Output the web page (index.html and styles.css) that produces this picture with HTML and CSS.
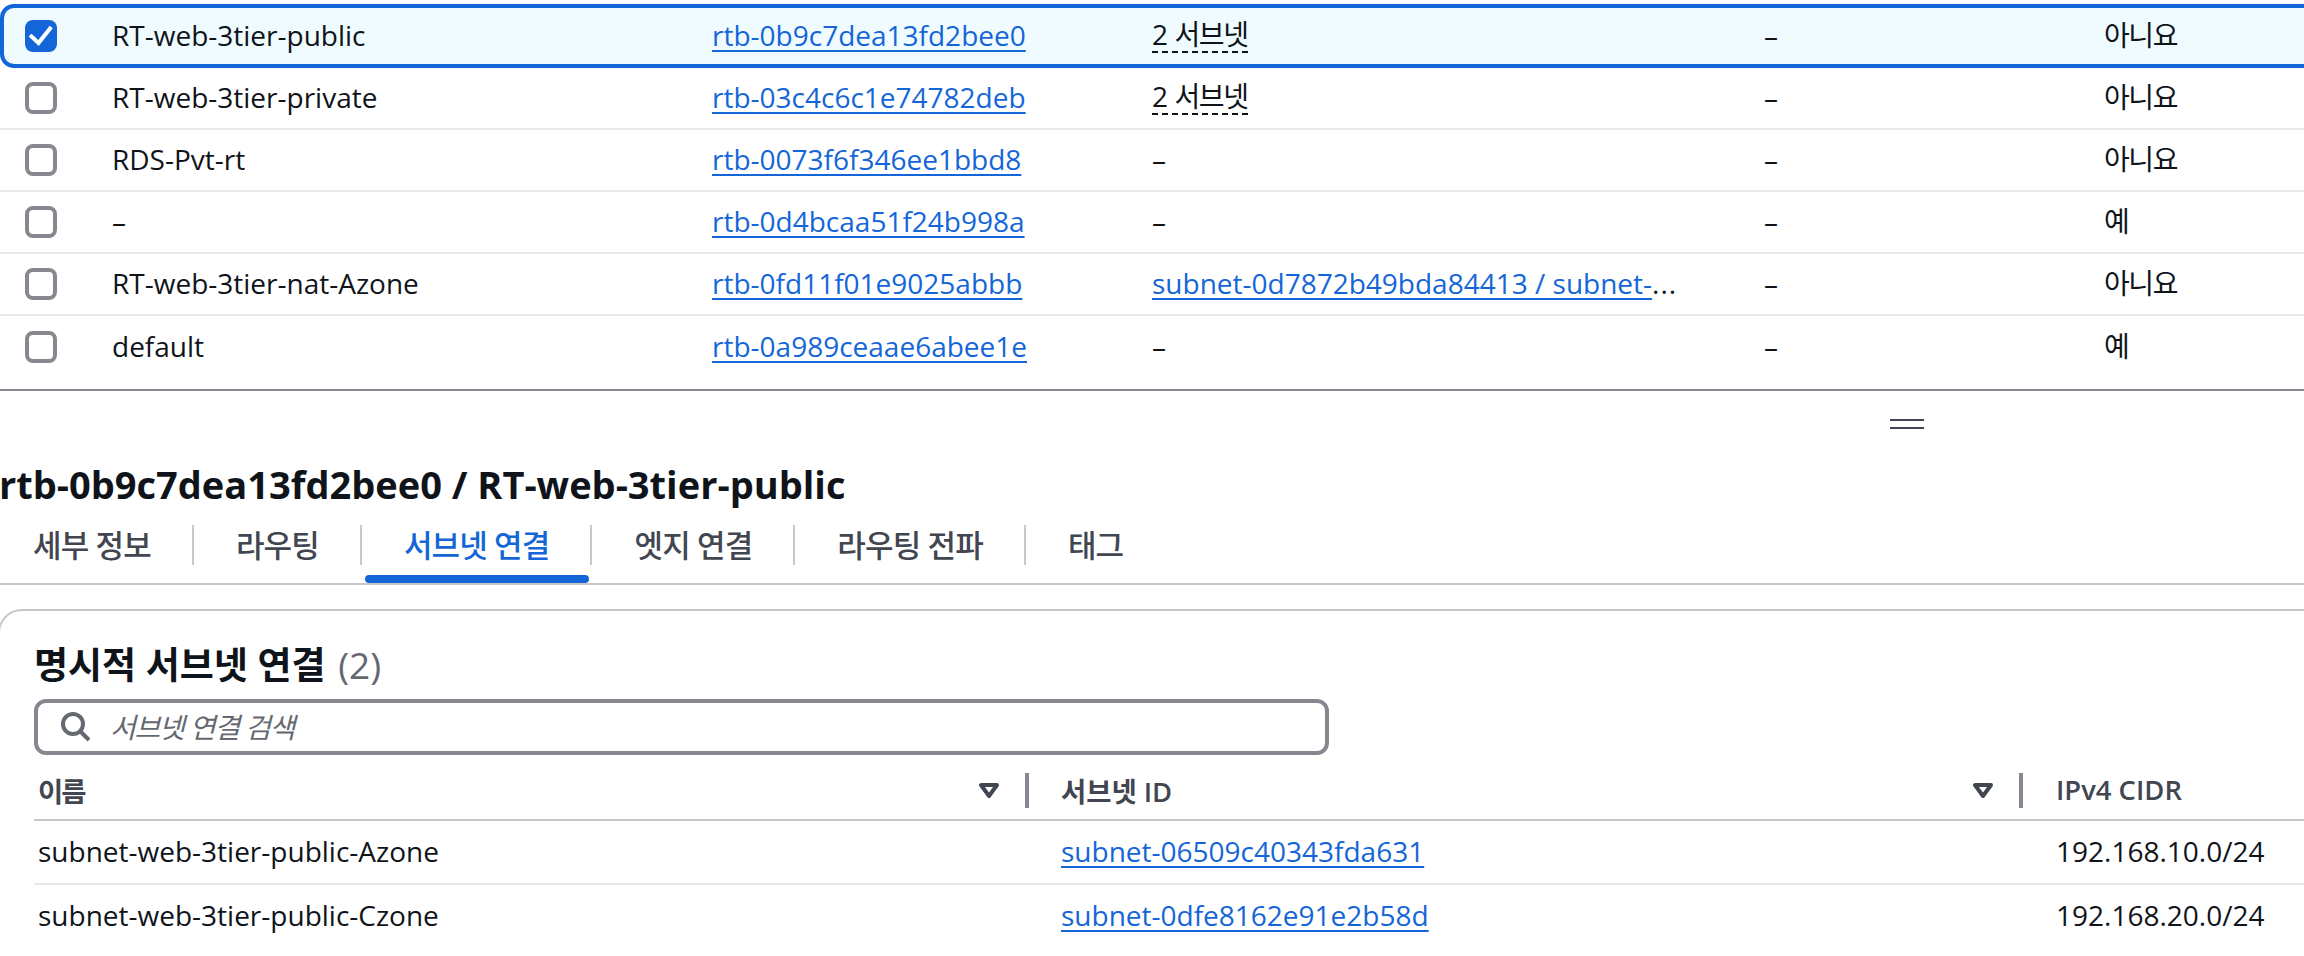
FILE: index.html
```html
<!DOCTYPE html>
<html lang="ko">
<head>
<meta charset="utf-8">
<title>라우팅 테이블</title>
<link rel="stylesheet" href="styles.css">
</head>
<body>
<div class="page">
  <section class="rt-table">
    <div class="rt-row selected">
      <span class="box checked"><svg viewBox="0 0 32 32" width="32" height="32"><path d="M6.5 16.5 13.5 23 25 8.5" class="tick"/></svg></span>
      <span class="cell">RT-web-3tier-public</span>
      <span class="cell"><a class="link">rtb-0b9c7dea13fd2bee0</a></span>
      <span class="cell"><span class="dashed ko">2 서브넷</span></span>
      <span class="cell">–</span>
      <span class="cell ko">아니요</span>
    </div>
    <div class="rt-row">
      <span class="box"></span>
      <span class="cell">RT-web-3tier-private</span>
      <span class="cell"><a class="link">rtb-03c4c6c1e74782deb</a></span>
      <span class="cell"><span class="dashed ko">2 서브넷</span></span>
      <span class="cell">–</span>
      <span class="cell ko">아니요</span>
    </div>
    <div class="rt-row">
      <span class="box"></span>
      <span class="cell">RDS-Pvt-rt</span>
      <span class="cell"><a class="link">rtb-0073f6f346ee1bbd8</a></span>
      <span class="cell">–</span>
      <span class="cell">–</span>
      <span class="cell ko">아니요</span>
    </div>
    <div class="rt-row">
      <span class="box"></span>
      <span class="cell">–</span>
      <span class="cell"><a class="link">rtb-0d4bcaa51f24b998a</a></span>
      <span class="cell">–</span>
      <span class="cell">–</span>
      <span class="cell ko">예</span>
    </div>
    <div class="rt-row">
      <span class="box"></span>
      <span class="cell">RT-web-3tier-nat-Azone</span>
      <span class="cell"><a class="link">rtb-0fd11f01e9025abbb</a></span>
      <span class="cell"><a class="link">subnet-0d7872b49bda84413 / subnet-</a><span class="more">...</span></span>
      <span class="cell">–</span>
      <span class="cell ko">아니요</span>
    </div>
    <div class="rt-row last">
      <span class="box"></span>
      <span class="cell">default</span>
      <span class="cell"><a class="link">rtb-0a989ceaae6abee1e</a></span>
      <span class="cell">–</span>
      <span class="cell">–</span>
      <span class="cell ko">예</span>
    </div>
  </section>

  <div class="handle-band"><span class="handle"></span></div>

  <h1 class="title">rtb-0b9c7dea13fd2bee0 / RT-web-3tier-public</h1>

  <nav class="tabs">
    <span class="tab">세부 정보</span>
    <span class="tab">라우팅</span>
    <span class="tab active">서브넷 연결</span>
    <span class="tab">엣지 연결</span>
    <span class="tab">라우팅 전파</span>
    <span class="tab plain">태그</span>
  </nav>

  <section class="card">
    <h2 class="card-title">명시적 서브넷 연결 <span class="count">(2)</span></h2>
    <div class="search">
      <svg class="search-icon" viewBox="0 0 30 30" width="30" height="30"><circle cx="12" cy="12" r="10"/><path d="M19.5 19.5 28 28"/></svg>
      <span class="placeholder">서브넷 연결 검색</span>
    </div>
    <div class="sub-table">
      <div class="sub-head">
        <div class="th first"><span class="name-head">이름</span><svg class="filter" viewBox="0 0 20 15" width="20" height="15"><path d="M2 2H18L10 13Z"/></svg></div>
        <div class="th"><span class="head-text">서브넷 ID</span><svg class="filter" viewBox="0 0 20 15" width="20" height="15"><path d="M2 2H18L10 13Z"/></svg></div>
        <div class="th plain"><span class="head-text">IPv4 CIDR</span></div>
      </div>
      <div class="sub-row">
        <div class="td first">subnet-web-3tier-public-Azone</div>
        <div class="td"><a class="link">subnet-06509c40343fda631</a></div>
        <div class="td">192.168.10.0/24</div>
      </div>
      <div class="sub-row">
        <div class="td first">subnet-web-3tier-public-Czone</div>
        <div class="td"><a class="link">subnet-0dfe8162e91e2b58d</a></div>
        <div class="td">192.168.20.0/24</div>
      </div>
    </div>
  </section>
</div>
</body>
</html>
```

FILE: styles.css
```css
* { box-sizing: border-box; }
html, body { margin: 0; padding: 0; background: #fff; }
body {
  width: 2304px;
  height: 956px;
  overflow: hidden;
  font-family: "Open Sans", "Noto Sans CJK KR", sans-serif;
  font-size: 28px;
  color: #0f141a;
}
.page { padding-top: 4px; }
.ko { letter-spacing: -1.4px; }

/* top table */
.rt-table { border-bottom: 2px solid #87878f; }
.rt-row {
  display: grid;
  grid-template-columns: 112px 600px 440px 612px 340px 1fr;
  align-items: center;
  height: 62px;
  border-bottom: 2px solid #e8e8ec;
}
.rt-row.selected {
  height: 64px;
  background: #f0fbff;
  border: 4px solid #1466d8;
  border-right: 0;
  border-radius: 14px 0 0 14px;
  margin-right: -20px;
  grid-template-columns: 108px 600px 440px 612px 340px 1fr;
}
.rt-row.selected .box { margin-left: 21px; }
.rt-row.last { height: 73px; border-bottom: 0; padding-bottom: 11px; }
.box {
  display: block;
  width: 32px;
  height: 32px;
  margin-left: 25px;
  border: 4px solid #87878f;
  border-radius: 8px;
  background: #fff;
}
.box.checked { border: 0; background: #1466d8; }
.box svg { display: block; }
.tick { fill: none; stroke: #fff; stroke-width: 4; stroke-linecap: square; }
.cell { white-space: nowrap; line-height: 34px; padding-bottom: 2px; }
.link {
  color: #1466d8;
  text-decoration: underline;
  text-decoration-thickness: 2px;
  text-underline-offset: 4px;
}
.more { color: #0f141a; letter-spacing: 1px; }
.dashed { display: inline-block; line-height: 34px; border-bottom: 2px dashed #0f141a; word-spacing: 2px; }

/* split handle */
.handle-band { height: 69px; padding: 28px 0 0 1890px; }
.handle {
  display: block;
  width: 34px;
  height: 10px;
  border-top: 2px solid #424650;
  border-bottom: 2px solid #424650;
}

/* heading */
.title {
  margin: 0 0 0 -1px;
  height: 48px;
  font-size: 38px;
  line-height: 48px;
  font-weight: 700;
  white-space: nowrap;
}

/* tabs */
.tabs {
  display: flex;
  margin-left: -9px;
  padding: 17px 0 18px;
  border-bottom: 2px solid #c6c6cd;
  width: 2313px;
}
.tab {
  position: relative;
  height: 40px;
  padding: 0 41px 0 42px;
  border-right: 2px solid #c6c6cd;
  font-size: 31px;
  font-weight: 500;
  line-height: 40px;
  letter-spacing: -0.85px;
  color: #424650;
  white-space: nowrap;
}
.tab.plain { border-right: 0; }
.tab.active { color: #1466d8; }
.tab.active::after {
  content: "";
  position: absolute;
  left: 3px;
  right: 1px;
  top: 50px;
  height: 8px;
  border-radius: 4px;
  background: #1466d8;
}

/* card */
.card {
  margin: 24px -40px 0 -2px;
  height: 380px;
  padding: 36px 0 0 34px;
  border: 2px solid #c6c6cd;
  border-radius: 24px;
}
.card-title {
  margin: 0;
  height: 36px;
  font-size: 37px;
  line-height: 36px;
  font-weight: 700;
  white-space: nowrap;
}
.count { margin-left: 3px; font-weight: 500; color: #656871; }
.search {
  display: flex;
  align-items: center;
  width: 1295px;
  height: 56px;
  margin-top: 16px;
  padding-left: 23px;
  border: 4px solid #87878f;
  border-radius: 12px;
}
.search-icon { flex: none; fill: none; stroke: #656871; stroke-width: 4; }
.placeholder { margin-left: 19px; font-style: italic; color: #656871; font-size: 28px; letter-spacing: -1.2px; line-height: 34px; }

/* lower table */
.sub-head, .sub-row {
  display: grid;
  grid-template-columns: 995px 994px 1fr;
}
.sub-head {
  height: 66px;
  padding-top: 18px;
  border-bottom: 2px solid #c6c6cd;
}
.th {
  display: flex;
  align-items: center;
  justify-content: space-between;
  height: 35px;
  padding: 0 26px 0 32px;
  border-right: 4px solid #87878f;
  font-size: 27.4px;
  font-weight: 600;
  color: #424650;
}
.head-text, .name-head { padding-bottom: 2px; }
.name-head { letter-spacing: -2px; }
.th.first { padding-left: 4px; }
.th.plain { border-right: 0; padding-left: 33px; }
.filter { flex: none; fill: none; stroke: #424650; stroke-width: 4; stroke-linejoin: round; }
.sub-row { height: 64px; align-items: center; border-bottom: 2px solid #e8e8ec; }
.sub-row:last-child { height: 62px; border-bottom: 0; }
.td { padding-left: 32px; padding-bottom: 2px; white-space: nowrap; }
.td.first { padding-left: 4px; }
.td:last-child { padding-left: 33px; }
```
